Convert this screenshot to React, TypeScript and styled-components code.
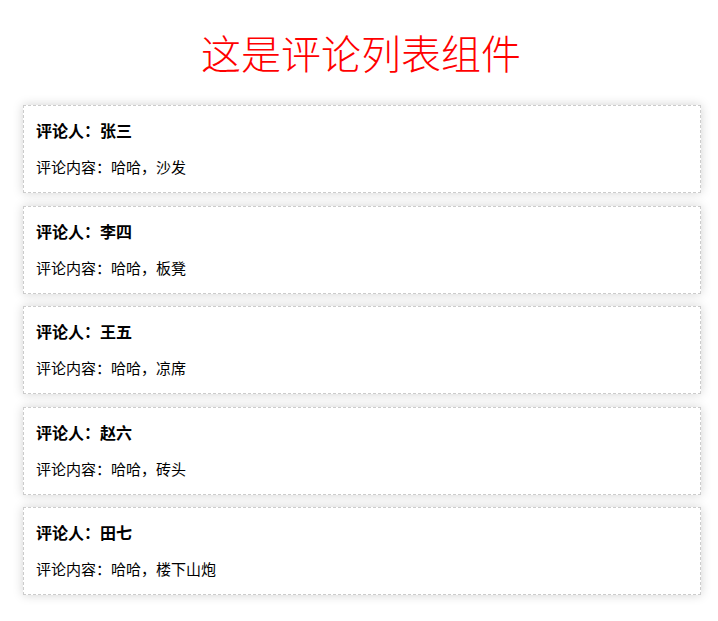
import React from "react";
import styled, { createGlobalStyle } from "styled-components";

const GlobalStyle = createGlobalStyle`
  html, body {
    margin: 0;
    padding: 0;
    background: #fff;
  }
  body {
    font-family: "Noto Sans CJK SC", "Noto Sans", sans-serif;
    color: #000;
  }
`;

const Page = styled.div`
  display: flex;
  flex-direction: column;
  padding: 24px 17px 20px 23px;
`;

const Title = styled.h1`
  margin: 0 0 25px -2px;
  font-size: 40px;
  line-height: 56px;
  font-weight: 300;
  color: #ff0000;
  text-align: center;
`;

const List = styled.div`
  display: flex;
  flex-direction: column;
  gap: 12.5px;
`;

const Card = styled.div`
  border: 1px dashed #ccc;
  box-shadow: 0 0 10px rgba(0, 0, 0, 0.18);
  padding: 13px 12px 15px;
  display: flex;
  flex-direction: column;
  gap: 16px;
  background: #fff;
`;

const Author = styled.h3`
  margin: 0;
  font-size: 16px;
  line-height: 22px;
  font-weight: 700;
`;

const Content = styled.p`
  margin: 0;
  font-size: 15px;
  line-height: 20px;
  font-weight: 400;
`;

const comments = [
  { user: "张三", content: "哈哈，沙发" },
  { user: "李四", content: "哈哈，板凳" },
  { user: "王五", content: "哈哈，凉席" },
  { user: "赵六", content: "哈哈，砖头" },
  { user: "田七", content: "哈哈，楼下山炮" },
];

export default function App() {
  return (
    <>
      <GlobalStyle />
      <Page>
        <Title>这是评论列表组件</Title>
        <List>
          {comments.map((c) => (
            <Card key={c.user}>
              <Author>评论人：{c.user}</Author>
              <Content>评论内容：{c.content}</Content>
            </Card>
          ))}
        </List>
      </Page>
    </>
  );
}
